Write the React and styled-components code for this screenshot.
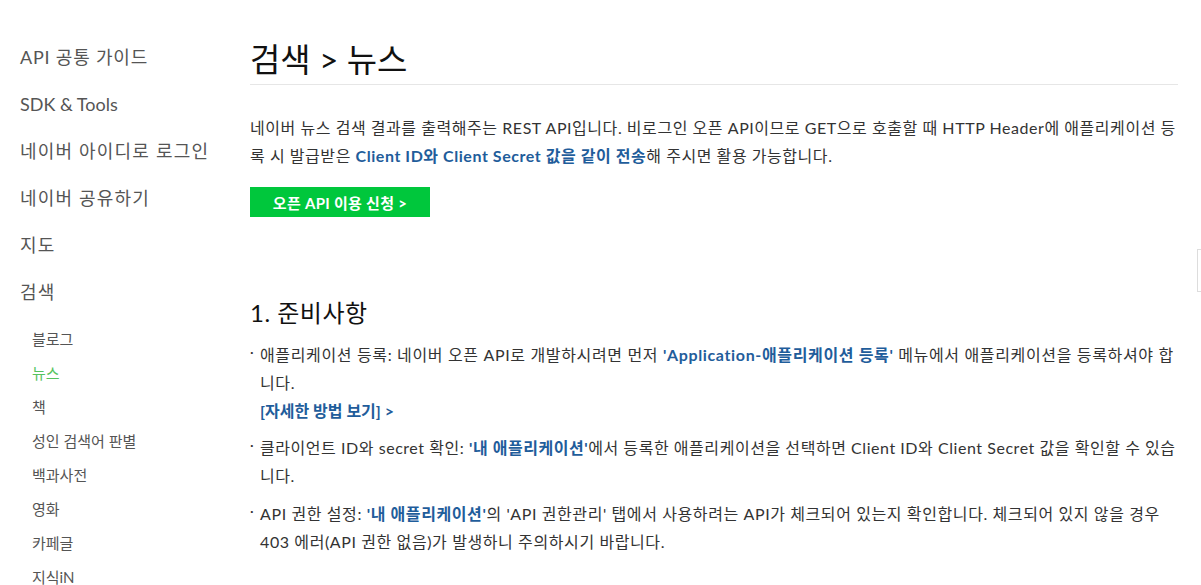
import React from 'react';
import styled, { createGlobalStyle } from 'styled-components';

const GlobalStyle = createGlobalStyle`
    html, body {
        margin: 0;
        padding: 0;
        background: #fff;
        overflow: hidden;
    }
    body {
        font-family: Lato, "Noto Sans CJK KR", sans-serif;
        color: #333;
    }
`;

const Page = styled.div`
    display: flex;
    width: 1201px;
    min-height: 585px;
`;

const Sidebar = styled.nav`
    width: 250px;
    flex-shrink: 0;
    padding: 34px 0 0 20px;
    box-sizing: border-box;

    & > ul {
        list-style: none;
        margin: 0;
        padding: 0;
    }
`;

const NavItem = styled.li`
    font-size: 18px;
    line-height: 47px;
    color: #555;
    white-space: nowrap;

    & > span {
        letter-spacing: ${(p) => p.spacing || 0}px;
    }
`;

const SubList = styled.ul`
    list-style: none;
    margin: 6px 0 0;
    padding: 0 0 0 12px;
`;

const SubItem = styled.li`
    font-size: 15px;
    line-height: 34px;
    color: ${(p) => (p.active ? '#55c35e' : '#555')};
`;

const Main = styled.main`
    flex: 1;
    padding: 39px 23px 0 0;
    min-width: 0;
`;

const Title = styled.h1`
    margin: 0;
    font-size: 33px;
    line-height: 40px;
    font-weight: 400;
    color: #111;
    padding-bottom: 5px;
    border-bottom: 1px solid #e6e6e6;
`;

const Intro = styled.p`
    margin: 29px 0 0;
    font-size: 16px;
    letter-spacing: 0.55px;
    line-height: 28px;
    color: #333;
`;

const Strong = styled.strong`
    color: #1f5d9b;
    font-weight: 700;
`;

const ApplyButton = styled.a`
    display: flex;
    align-items: center;
    justify-content: center;
    margin-top: 17px;
    width: 180px;
    height: 30px;
    background: #00c73c;
    color: #fff;
    font-size: 15px;
    letter-spacing: 0.3px;
    font-weight: 700;
    text-decoration: none;
`;

const Section = styled.section`
    margin-top: 80px;

    & > h2 {
        margin: 0;
        font-size: 24px;
        letter-spacing: 0.5px;
        line-height: 32px;
        font-weight: 400;
        color: #111;
    }
`;

const Bullets = styled.ul`
    list-style: none;
    margin: 12px 0 0;
    padding: 0;
`;

const Bullet = styled.li`
    position: relative;
    padding-left: 10px;
    font-size: 16px;
    letter-spacing: ${(p) => p.spacing}px;
    line-height: 28px;
    color: #333;
    & + & {
        margin-top: 10px;
    }

    &::before {
        content: '·';
        position: absolute;
        left: 0;
        top: -3px;
        font-size: 14px;
        color: #333;
    }
`;

const MoreLink = styled.a`
    display: block;
    line-height: 27px;
    letter-spacing: 0;
    color: #1f5d9b;
    font-weight: 700;
    text-decoration: none;
`;

const FloatingTab = styled.div`
    position: fixed;
    top: 249px;
    right: -20px;
    width: 22px;
    height: 41px;
    border: 1px solid #ddd;
    background: #fff;
`;

const topMenu = [
    { label: 'API 공통 가이드', spacing: 0.8 },
    { label: 'SDK & Tools', spacing: 0 },
    { label: '네이버 아이디로 로그인', spacing: 1.2 },
    { label: '네이버 공유하기', spacing: 1.2 },
    { label: '지도', spacing: 1.2 },
];
const searchMenu = ['블로그', '뉴스', '책', '성인 검색어 판별', '백과사전', '영화', '카페글', '지식iN'];

export default function App() {
    return (
        <Page>
            <GlobalStyle />
            <Sidebar>
                <ul>
                    {topMenu.map((m) => (
                        <NavItem key={m.label} spacing={m.spacing}>
                            <span>{m.label}</span>
                        </NavItem>
                    ))}
                    <NavItem spacing={1.2}>
                        <span>검색</span>
                        <SubList>
                            {searchMenu.map((s) => (
                                <SubItem key={s} active={s === '뉴스'}>{s}</SubItem>
                            ))}
                        </SubList>
                    </NavItem>
                </ul>
            </Sidebar>
            <Main>
                <Title>검색 &gt; 뉴스</Title>
                <Intro>
                    네이버 뉴스 검색 결과를 출력해주는 REST API입니다. 비로그인 오픈 API이므로 GET으로 호출할 때 HTTP Header에 애플리케이션 등록 시 발급받은{' '}
                    <Strong>Client ID와 Client Secret 값을 같이 전송</Strong>해 주시면 활용 가능합니다.
                </Intro>
                <ApplyButton href="#">오픈 API 이용 신청 &gt;</ApplyButton>
                <Section>
                    <h2>1. 준비사항</h2>
                    <Bullets>
                        <Bullet spacing={0.65}>
                            애플리케이션 등록: 네이버 오픈 API로 개발하시려면 먼저 <Strong>'Application-애플리케이션 등록'</Strong> 메뉴에서 애플리케이션을 등록하셔야 합니다.
                            <MoreLink href="#">[자세한 방법 보기] &gt;</MoreLink>
                        </Bullet>
                        <Bullet spacing={0.55}>
                            클라이언트 ID와 secret 확인: <Strong>'내 애플리케이션'</Strong>에서 등록한 애플리케이션을 선택하면 Client ID와 Client Secret 값을 확인할 수 있습니다.
                        </Bullet>
                        <Bullet spacing={0.6}>
                            API 권한 설정: <Strong>'내 애플리케이션'</Strong>의 'API 권한관리' 탭에서 사용하려는 API가 체크되어 있는지 확인합니다. 체크되어 있지 않을 경우 403 에러(API 권한 없음)가 발생하니 주의하시기 바랍니다.
                        </Bullet>
                    </Bullets>
                </Section>
            </Main>
            <FloatingTab />
        </Page>
    );
}
